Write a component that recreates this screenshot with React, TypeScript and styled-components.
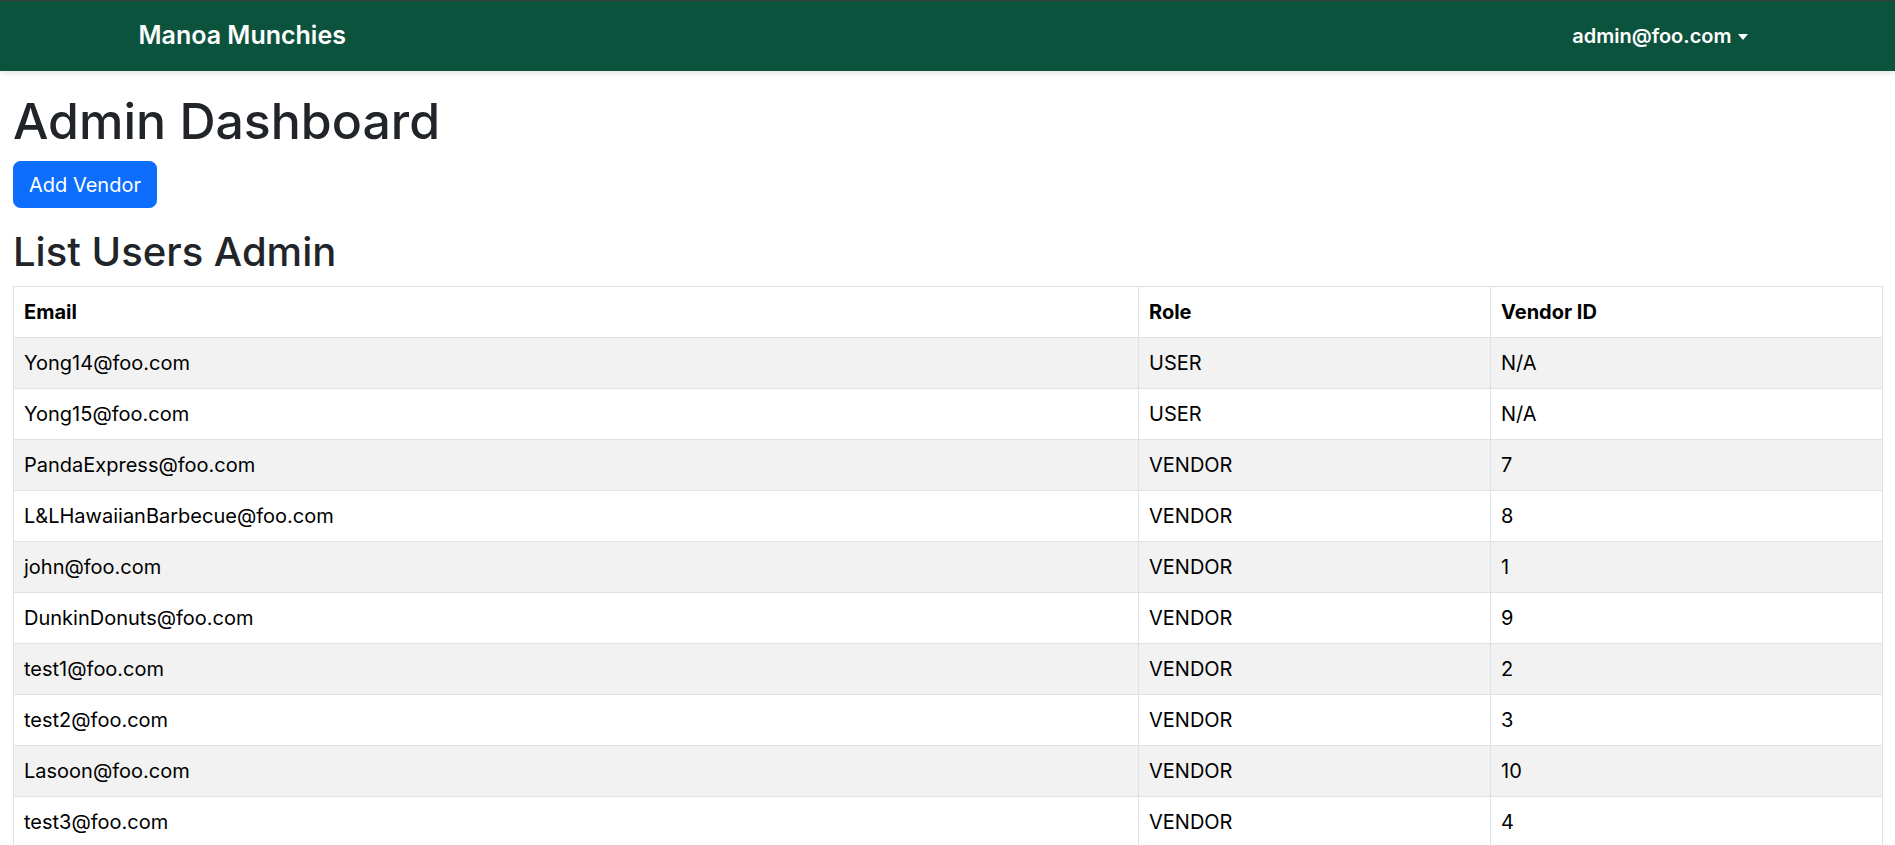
import React from "react";
import styled, { createGlobalStyle } from "styled-components";

const GlobalStyle = createGlobalStyle`
  * { box-sizing: border-box; }
  html, body { margin: 0; padding: 0; }
  body {
    font-family: Inter, "Noto Sans", "Liberation Sans", sans-serif;
    font-size: 20px;
    line-height: 1.5;
    color: #212529;
    background: #fff;
  }
`;

const NavBar = styled.nav`
  background: #0c533e;
  border-top: 1px solid #3b3b3b;
  height: 71px;
  box-shadow: 0 2px 6px rgba(0, 0, 0, 0.12);
  display: flex;
  align-items: center;
`;

const NavInner = styled.div`
  width: 100%;
  max-width: 1650px;
  margin: 0 auto;
  padding: 0 15px;
  display: flex;
  align-items: center;
  justify-content: space-between;
`;

const Brand = styled.a`
  color: #fff;
  font-size: 25px;
  font-weight: 600;
  line-height: 1.5;
  text-decoration: none;
  padding-left: 1px;
`;

const UserMenu = styled.button`
  background: none;
  border: none;
  color: #fff;
  font-family: inherit;
  font-size: 20px;
  font-weight: 600;
  line-height: 1.5;
  padding: 8px 10px;
  display: flex;
  align-items: center;
  gap: 6px;
  cursor: pointer;
`;

const Caret = styled.span`
  display: inline-block;
  width: 0;
  height: 0;
  border-left: 5px solid transparent;
  border-right: 5px solid transparent;
  border-top: 6px solid #fff;
  margin-top: 1px;
`;

const Main = styled.main`
  padding: 20px 12px 0 13px;
`;

const Title = styled.h1`
  margin: 0 0 10px;
  font-size: 50px;
  font-weight: 500;
  line-height: 1.2;
  color: #212529;
`;

const PrimaryButton = styled.button`
  background: #0d6efd;
  color: #fff;
  border: 1px solid #0d6efd;
  border-radius: 7.5px;
  font-family: inherit;
  font-size: 20px;
  line-height: 1.5;
  padding: 7.5px 15px;
  cursor: pointer;
`;

const SubTitle = styled.h2`
  margin: 20px 0 10px;
  font-size: 40px;
  font-weight: 500;
  line-height: 1.2;
  color: #212529;
`;

const Table = styled.table`
  width: 100%;
  border-collapse: collapse;
  border: 1px solid #dee2e6;
  color: #000;
`;

const HeadCell = styled.th`
  text-align: left;
  font-weight: 700;
  padding: 10px;
  border: 1px solid #dee2e6;
  background: #fff;
  line-height: 30px;
`;

const Row = styled.tr<{ $striped: boolean }>`
  background: ${(p) => (p.$striped ? "#f2f2f2" : "#fff")};
`;

const Cell = styled.td`
  padding: 10px;
  border: 1px solid #dee2e6;
  line-height: 30px;
`;

const users = [
  { email: "Yong14@foo.com", role: "USER", vendor: "N/A" },
  { email: "Yong15@foo.com", role: "USER", vendor: "N/A" },
  { email: "PandaExpress@foo.com", role: "VENDOR", vendor: "7" },
  { email: "L&LHawaiianBarbecue@foo.com", role: "VENDOR", vendor: "8" },
  { email: "john@foo.com", role: "VENDOR", vendor: "1" },
  { email: "DunkinDonuts@foo.com", role: "VENDOR", vendor: "9" },
  { email: "test1@foo.com", role: "VENDOR", vendor: "2" },
  { email: "test2@foo.com", role: "VENDOR", vendor: "3" },
  { email: "Lasoon@foo.com", role: "VENDOR", vendor: "10" },
  { email: "test3@foo.com", role: "VENDOR", vendor: "4" },
  { email: "test4@foo.com", role: "VENDOR", vendor: "5" },
];

export default function App() {
  return (
    <>
      <GlobalStyle />
      <NavBar>
        <NavInner>
          <Brand href="#">Manoa Munchies</Brand>
          <UserMenu>
            admin@foo.com
            <Caret />
          </UserMenu>
        </NavInner>
      </NavBar>
      <Main>
        <Title>Admin Dashboard</Title>
        <PrimaryButton>Add Vendor</PrimaryButton>
        <SubTitle>List Users Admin</SubTitle>
        <Table>
          <colgroup>
            <col style={{ width: "1125px" }} />
            <col style={{ width: "352px" }} />
            <col />
          </colgroup>
          <thead>
            <tr>
              <HeadCell>Email</HeadCell>
              <HeadCell>Role</HeadCell>
              <HeadCell>Vendor ID</HeadCell>
            </tr>
          </thead>
          <tbody>
            {users.map((u, i) => (
              <Row key={u.email} $striped={i % 2 === 0}>
                <Cell>{u.email}</Cell>
                <Cell>{u.role}</Cell>
                <Cell>{u.vendor}</Cell>
              </Row>
            ))}
          </tbody>
        </Table>
      </Main>
    </>
  );
}
